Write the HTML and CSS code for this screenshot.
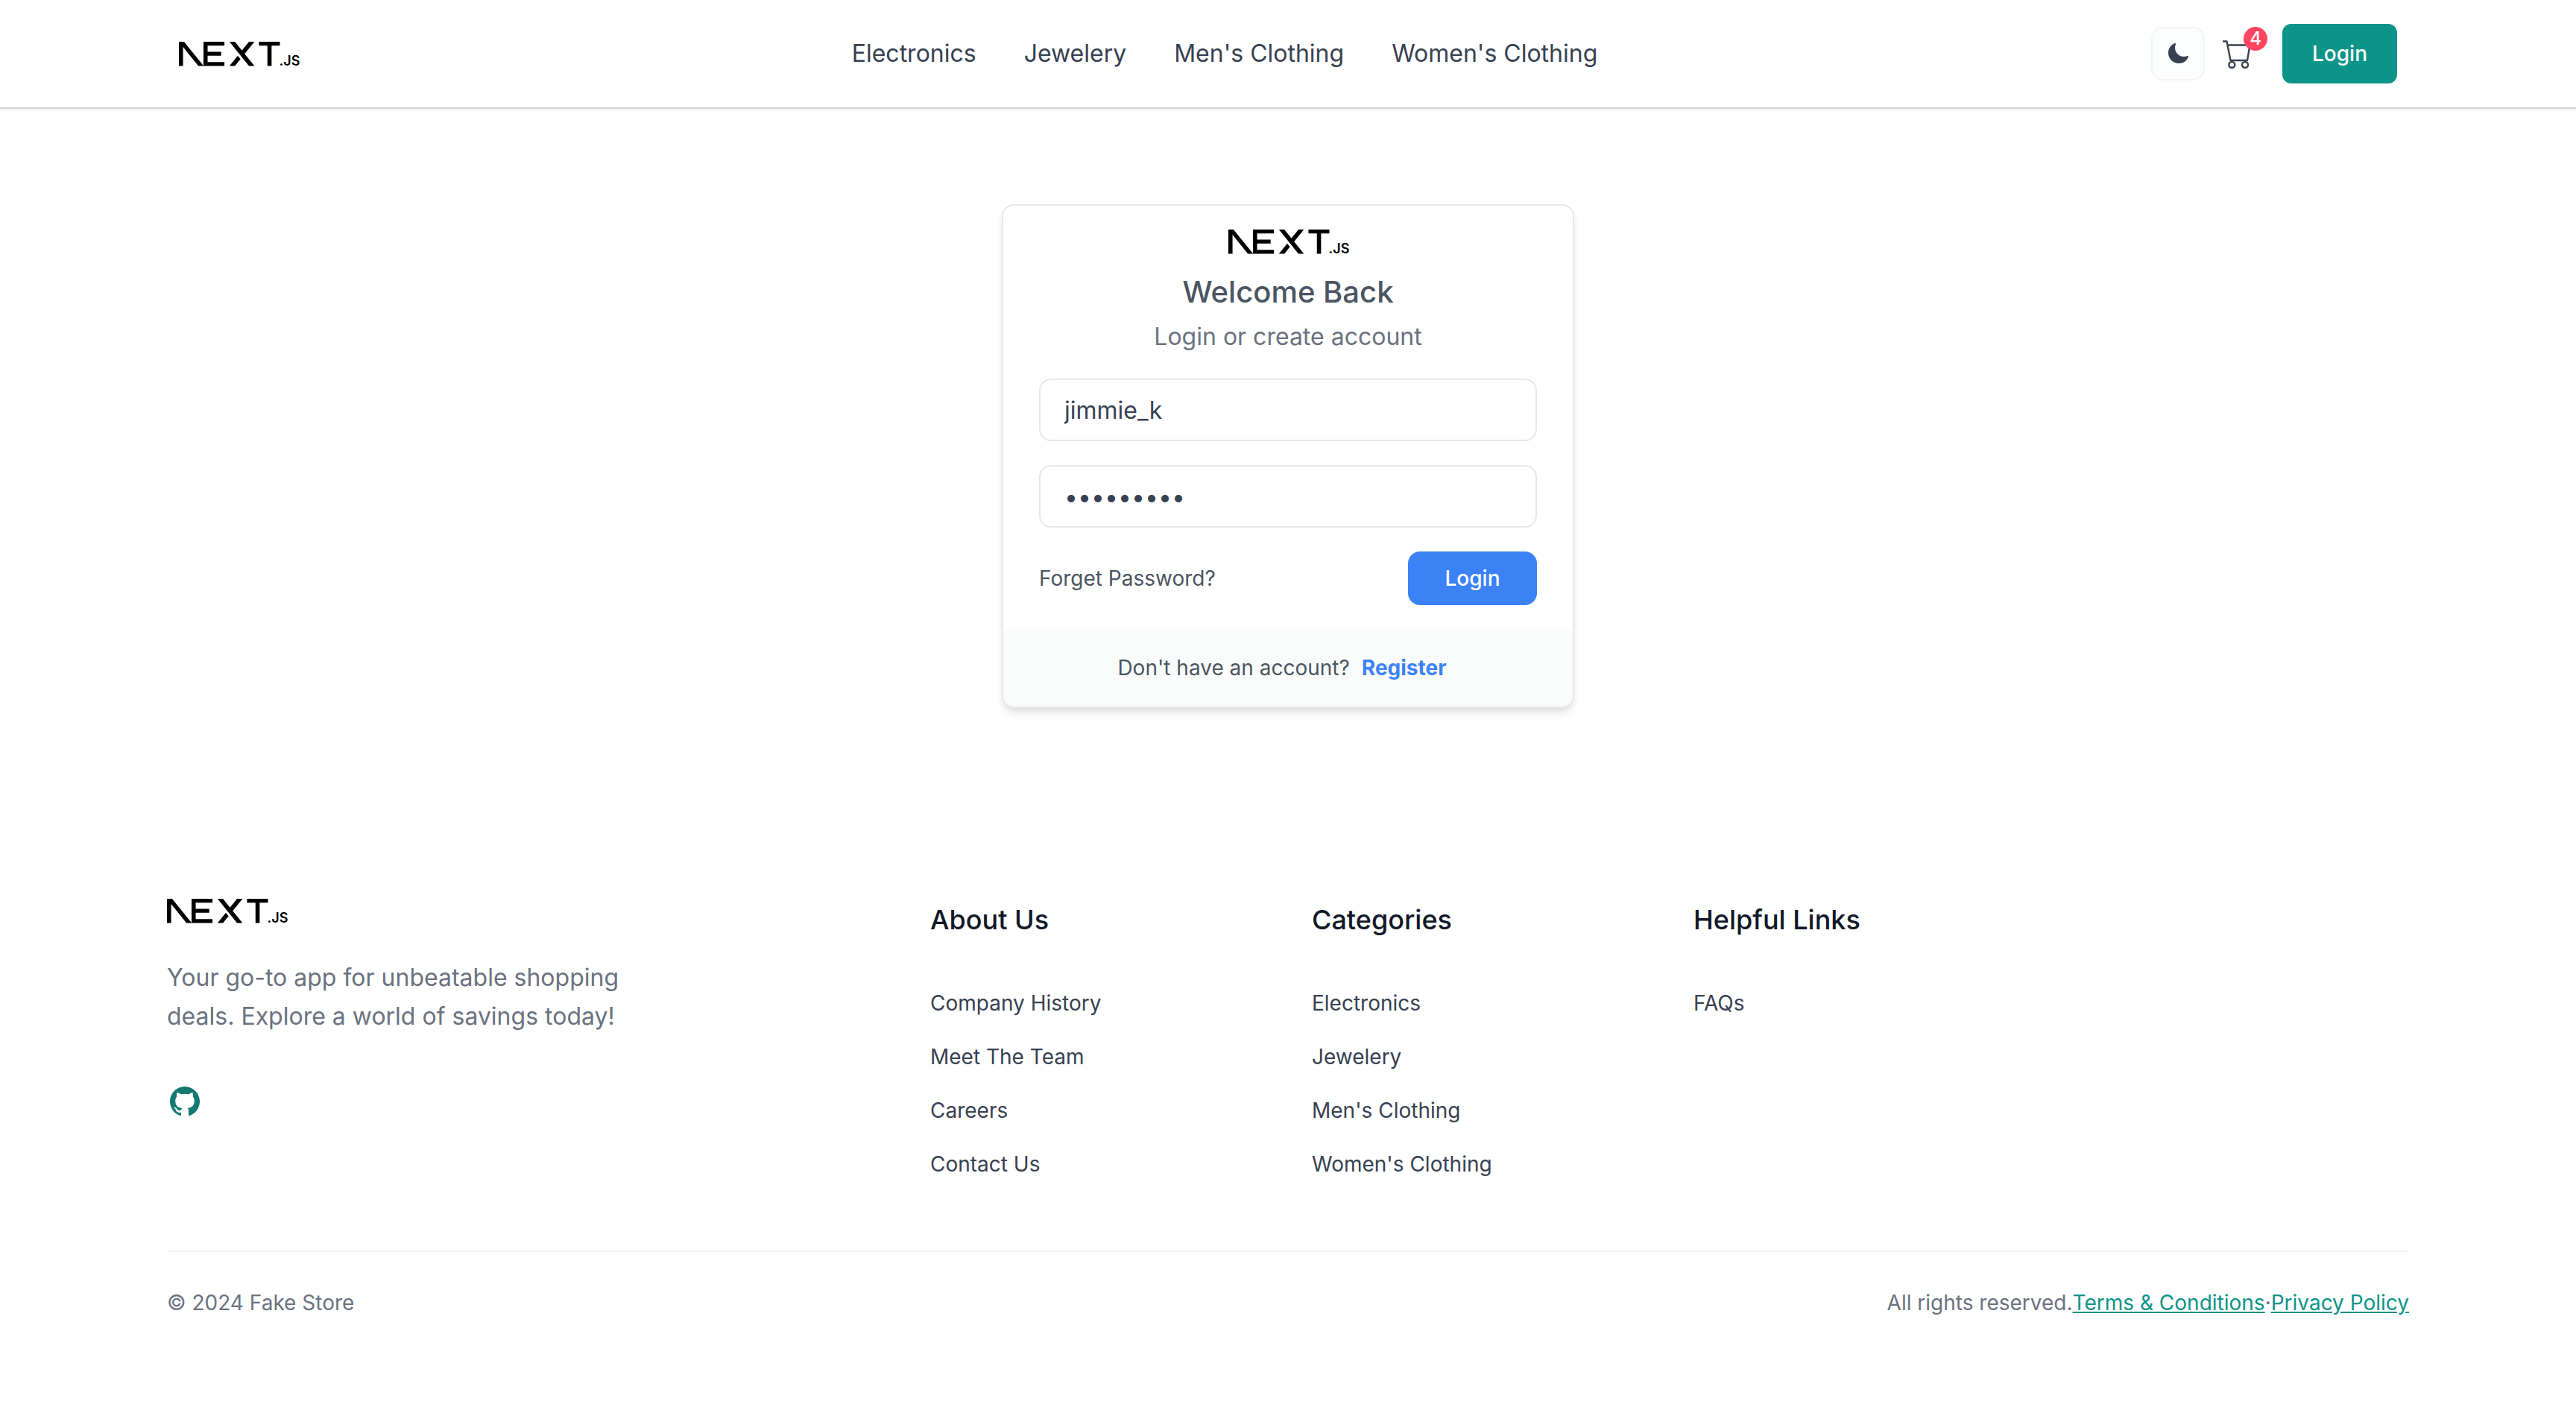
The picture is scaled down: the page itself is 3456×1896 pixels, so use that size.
FILE: index.html
```html
<!DOCTYPE html>
<html lang="en">
<head>
<meta charset="utf-8">
<meta name="viewport" content="width=device-width, initial-scale=1">
<title>Fake Store - Login</title>
<link rel="stylesheet" href="styles.css">
</head>
<body>
<svg class="defs" aria-hidden="true">
  <symbol id="logo" viewBox="0 0 400 100">
    <path d="M262 0h68.5v12.7h-27.2v66.6h-13.6V12.7H262V0ZM149 0v12.7H94v20.4h44.3v12.6H94v21h55v12.6H80.5V0h68.7zm34.3 0h-17.8l63.8 79.4h17.9l-32-39.7 32-39.6h-17.9l-23 28.6-23-28.6zm18.3 56.7-9-11-27.1 33.7h17.8l18.3-22.7z"/>
    <path d="M81 79.3 17 0H0v79.3h13.6V17l50.2 62.3H81Z"/>
    <text x="328" y="79" class="logo-suffix">.JS</text>
  </symbol>
</svg>

<header class="header">
  <div class="header-inner">
    <a href="#" class="logo-link" aria-label="Home"><svg class="logo"><use href="#logo"/></svg></a>
    <nav class="nav">
      <a href="#">Electronics</a>
      <a href="#">Jewelery</a>
      <a href="#">Men's Clothing</a>
      <a href="#">Women's Clothing</a>
    </nav>
    <div class="actions">
      <button type="button" class="theme-button" aria-label="Toggle dark mode">
        <svg viewBox="0 0 24 24"><path d="M9.528 1.718a.75.75 0 01.162.819A8.97 8.97 0 009 6a9 9 0 009 9 8.97 8.97 0 003.463-.69.75.75 0 01.981.98 10.503 10.503 0 01-9.694 6.46c-5.799 0-10.5-4.7-10.5-10.5 0-4.368 2.667-8.112 6.46-9.694a.75.75 0 01.818.162z"/></svg>
      </button>
      <a href="#" class="cart" aria-label="Cart">
        <svg viewBox="0 0 40 40"><path d="M.8 3.5h4.7l5 25.5H33l3.5-20.5h-30"/><circle cx="12.3" cy="35" r="4"/><circle cx="30" cy="35" r="4"/></svg>
        <span class="badge">4</span>
      </a>
      <button type="button" class="login-button">Login</button>
    </div>
  </div>
</header>

<main class="main">
  <section class="card">
    <form class="form">
      <svg class="logo"><use href="#logo"/></svg>
      <h1 class="title">Welcome Back</h1>
      <p class="subtitle">Login or create account</p>
      <div class="fields">
        <input class="field" type="text" aria-label="Username" value="jimmie_k">
        <input class="field" type="password" aria-label="Password" value="password1">
        <div class="form-row">
          <a href="#">Forget Password?</a>
          <button type="button" class="submit">Login</button>
        </div>
      </div>
    </form>
    <div class="card-footer">
      <span>Don't have an account?</span>
      <a href="#" class="register">Register</a>
    </div>
  </section>
</main>

<footer class="footer">
  <div class="footer-grid">
    <div class="about">
      <svg class="logo"><use href="#logo"/></svg>
      <p class="about-text">Your go-to app for unbeatable shopping deals. Explore a world of savings today!</p>
      <a href="#" class="github" aria-label="GitHub">
        <svg viewBox="0 0 24 24"><path fill-rule="evenodd" d="M12 2C6.477 2 2 6.484 2 12.017c0 4.425 2.865 8.18 6.839 9.504.5.092.682-.217.682-.483 0-.237-.008-.868-.013-1.703-2.782.605-3.369-1.343-3.369-1.343-.454-1.158-1.11-1.466-1.11-1.466-.908-.62.069-.608.069-.608 1.003.07 1.531 1.032 1.531 1.032.892 1.53 2.341 1.088 2.91.832.092-.647.35-1.088.636-1.338-2.22-.253-4.555-1.113-4.555-4.951 0-1.093.39-1.988 1.029-2.688-.103-.253-.446-1.272.098-2.65 0 0 .84-.27 2.75 1.026A9.564 9.564 0 0112 6.844c.85.004 1.705.115 2.504.337 1.909-1.296 2.747-1.027 2.747-1.027.546 1.379.202 2.398.1 2.651.64.7 1.028 1.595 1.028 2.688 0 3.848-2.339 4.695-4.566 4.943.359.309.678.92.678 1.855 0 1.338-.012 2.419-.012 2.747 0 .268.18.58.688.482A10.019 10.019 0 0022 12.017C22 6.484 17.522 2 12 2z"/></svg>
      </a>
    </div>
    <div class="link-grid">
      <div>
        <h2>About Us</h2>
        <ul>
          <li><a href="#">Company History</a></li>
          <li><a href="#">Meet The Team</a></li>
          <li><a href="#">Careers</a></li>
          <li><a href="#">Contact Us</a></li>
        </ul>
      </div>
      <div>
        <h2>Categories</h2>
        <ul>
          <li><a href="#">Electronics</a></li>
          <li><a href="#">Jewelery</a></li>
          <li><a href="#">Men's Clothing</a></li>
          <li><a href="#">Women's Clothing</a></li>
        </ul>
      </div>
      <div>
        <h2>Helpful Links</h2>
        <ul>
          <li><a href="#">FAQs</a></li>
        </ul>
      </div>
    </div>
  </div>
  <div class="legal">
    <p>© 2024 Fake Store</p>
    <p class="legal-links"><span>All rights reserved.</span><a href="#">Terms &amp; Conditions</a><span>·</span><a href="#">Privacy Policy</a></p>
  </div>
</footer>
</body>
</html>
```
FILE: styles.css
```css
* { box-sizing: border-box; margin: 0; padding: 0; }

body {
  font-family: Inter, "Liberation Sans", sans-serif;
  font-size: 32px;
  line-height: 48px;
  color: #374151;
  background: #fff;
}

a { color: inherit; text-decoration: none; }
ul { list-style: none; }
button, input { font: inherit; color: inherit; }
button { border: 0; cursor: pointer; }
svg { display: block; }

.defs { position: absolute; width: 0; height: 0; overflow: visible; }
.logo { width: 164px; height: 41px; margin: 0 -4px -9px 0; fill: #000; overflow: visible; }
.logo-suffix { font-size: 44px; line-height: 44px; font-weight: 600; }

.header {
  border-bottom: 2px solid #d1d5db;
  box-shadow: 0 2px 4px rgba(0, 0, 0, 0.05);
}
.header-inner {
  display: flex;
  align-items: center;
  justify-content: space-between;
  max-width: 3072px;
  margin: 0 auto;
  padding: 32px 48px;
}
.nav { display: flex; gap: 64px; }
.actions { display: flex; align-items: center; }

.theme-button {
  display: grid;
  place-items: center;
  width: 72px;
  height: 72px;
  background: #fcfdfd;
  border: 2px solid #f3f4f6;
  border-radius: 16px;
}
.theme-button svg { width: 32px; height: 32px; fill: #374151; }

.cart { position: relative; margin: 0 40px 0 24px; }
.cart svg {
  width: 40px;
  height: 40px;
  fill: none;
  stroke: #374151;
  stroke-width: 2.4;
  stroke-linejoin: round;
  stroke-linecap: round;
}
.badge {
  position: absolute;
  top: -16px;
  right: -20px;
  width: 32px;
  height: 32px;
  border-radius: 50%;
  background: #ff455f;
  color: #fff;
  font-size: 24px;
  font-weight: 500;
  line-height: 32px;
  text-align: center;
}
.login-button {
  padding: 20px 40px;
  border-radius: 12px;
  background: #0d9488;
  color: #fff;
  font-size: 28px;
  line-height: 40px;
  font-weight: 500;
}

.main { padding: 128px 32px; }
.card {
  max-width: 768px;
  margin: 0 auto;
  overflow: hidden;
  border: 2px solid #e5e7eb;
  border-radius: 16px;
  box-shadow: 0 8px 12px -2px rgba(0, 0, 0, 0.1), 0 4px 8px -4px rgba(0, 0, 0, 0.1);
}
.form {
  display: flex;
  flex-direction: column;
  align-items: center;
  padding: 32px 48px;
}
.title {
  margin-top: 24px;
  font-size: 40px;
  line-height: 56px;
  font-weight: 500;
  color: #4b5563;
}
.subtitle { margin-top: 8px; color: #6b7280; }
.fields {
  display: flex;
  flex-direction: column;
  gap: 32px;
  width: 100%;
  margin-top: 32px;
}
.field {
  width: 100%;
  height: 84px;
  padding: 16px 32px;
  border: 2px solid #e5e7eb;
  border-radius: 16px;
  background: #fff;
  outline: 0;
}
.form-row {
  display: flex;
  align-items: center;
  justify-content: space-between;
  font-size: 28px;
  line-height: 40px;
  color: #4b5563;
}
.submit {
  min-width: 173px;
  padding: 16px 48px;
  border-radius: 16px;
  background: #3b82f6;
  color: #fff;
  font-weight: 500;
}
.card-footer {
  display: flex;
  justify-content: center;
  padding: 32px;
  background: #fafcfb;
  font-size: 28px;
  line-height: 40px;
  color: #4b5563;
}
.register { margin: 0 16px; font-weight: 700; color: #3b82f6; }

.footer {
  max-width: 3072px;
  margin: 0 auto;
  padding: 128px 32px;
}
.footer-grid {
  display: grid;
  grid-template-columns: repeat(3, 1fr);
  gap: 64px;
}
.link-grid {
  display: grid;
  grid-column: span 2;
  grid-template-columns: repeat(4, 1fr);
  gap: 64px;
}
.about { display: flow-root; }
.about-text {
  max-width: 640px;
  padding-top: 48px;
  line-height: 52px;
  color: #6b7280;
}
.github { display: inline-block; margin-top: 64px; }
.github svg { width: 48px; height: 48px; fill: #147a71; }

.link-grid h2 {
  font-size: 36px;
  line-height: 56px;
  font-weight: 500;
  color: #111827;
}
.link-grid ul {
  display: grid;
  gap: 32px;
  margin-top: 64px;
  font-size: 28px;
  line-height: 40px;
}
.legal {
  display: flex;
  justify-content: space-between;
  margin-top: 96px;
  padding-top: 48px;
  border-top: 2px solid #f3f4f6;
  font-size: 28px;
  line-height: 40px;
  color: #6b7280;
}
.legal-links { display: flex; }
.legal-links a { color: #0d9488; text-decoration: underline; }
```
